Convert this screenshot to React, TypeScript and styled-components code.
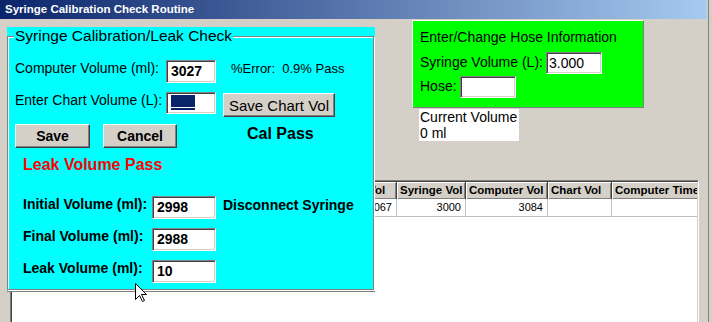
import * as React from 'react'
import styled, { createGlobalStyle } from 'styled-components'

const GlobalStyle = createGlobalStyle`
  html, body {
    margin: 0;
    padding: 0;
    background: #d4d0c8;
  }
  body {
    font-family: "Liberation Sans", Arial, sans-serif;
    color: #000;
  }
`

const Window = styled.div`
  position: relative;
  width: 708px;
  height: 322px;
  overflow: hidden;
  border-right: 1px solid #808080;
`

const TitleBar = styled.div`
  width: 707px;
  height: 19px;
  box-sizing: border-box;
  padding-left: 5px;
  background: linear-gradient(to right, #0a246a, #a6caf0);
  color: #fff;
  font-size: 11.5px;
  font-weight: bold;
  line-height: 19px;
  white-space: nowrap;
`

const Body = styled.div`
  padding-left: 10px;
`

const TopRow = styled.div`
  height: 161px;
  box-sizing: border-box;
  padding: 1px 0 0 402px;
`

const HosePanel = styled.div`
  width: 232px;
  height: 88px;
  box-sizing: border-box;
  padding: 8px 0 0 7px;
  background: #00ff00;
  border: 1px solid;
  border-color: #fff #808080 #808080 #fff;
  font-size: 14px;
  line-height: 16px;
`

const HoseRow = styled.div<{ $top: number }>`
  display: flex;
  align-items: flex-start;
  gap: 3px;
  margin-top: ${p => p.$top}px;
  white-space: nowrap;
`

const HoseLabel = styled.span`
  margin-top: 2px;
`

const VolumeBox = styled.div`
  width: 100px;
  height: 32px;
  box-sizing: border-box;
  margin: 1px 0 0 7px;
  padding-left: 1px;
  background: #fff;
  font-size: 14px;
  line-height: 16px;
`

const TableFrame = styled.div`
  width: 689px;
  height: 160px;
  box-sizing: border-box;
  border: 1px solid;
  border-color: #808080 #fff #fff #808080;
`

const TableInner = styled.div`
  height: 100%;
  box-sizing: border-box;
  border: 1px solid;
  border-color: #404040 #d4d0c8 #d4d0c8 #404040;
  background: #fff;
  overflow: hidden;
`

const Row = styled.div`
  display: flex;
`

const HeadCell = styled.div<{ $w: number }>`
  flex: 0 0 ${p => p.$w}px;
  height: 17px;
  box-sizing: border-box;
  padding: 0 3px;
  background: #d4d0c8;
  border-right: 1px solid #404040;
  box-shadow: inset 1px 1px #fff, inset -1px -1px #808080;
  font-size: 11.5px;
  font-weight: bold;
  line-height: 17px;
  white-space: nowrap;
  overflow: hidden;
`

const DataCell = styled.div<{ $w: number; $right?: boolean }>`
  flex: 0 0 ${p => p.$w}px;
  height: 18px;
  box-sizing: border-box;
  padding: 0 4px;
  border-right: 1px solid #c0c0c0;
  border-bottom: 1px solid #c0c0c0;
  font-size: 11px;
  line-height: 17px;
  text-align: ${p => (p.$right ? 'right' : 'left')};
  white-space: nowrap;
  overflow: hidden;
`

const CalPanel = styled.div`
  position: absolute;
  left: 7px;
  top: 27px;
  width: 368px;
  height: 265px;
  box-sizing: border-box;
  background: #00ffff;
  border-bottom: 1px solid #808080;
`

const Group = styled.fieldset`
  margin: 0;
  padding: 0;
  width: 367px;
  height: 263px;
  min-inline-size: 0;
  box-sizing: border-box;
  border: 1px solid #808080;
  box-shadow: inset 1px 1px #fff, 1px 1px #fff;
`

const GroupTitle = styled.legend`
  margin-left: 6px;
  padding: 0 1px;
  background: #00ffff;
  font-size: 15.5px;
  line-height: 18px;
`

const Section = styled.div<{ $left: number }>`
  padding-left: ${p => p.$left}px;
`

const FormRow = styled.div<{ $top: number }>`
  display: flex;
  align-items: flex-start;
  margin-top: ${p => p.$top}px;
`

const Label = styled.span<{ $w: number; $bold?: boolean }>`
  flex: none;
  width: ${p => p.$w}px;
  font-size: 14px;
  font-weight: ${p => (p.$bold ? 'bold' : 'normal')};
  line-height: 16px;
  white-space: nowrap;
`

const Note = styled.span<{ $left: number; $size: number; $bold?: boolean }>`
  margin-left: ${p => p.$left}px;
  font-size: ${p => p.$size}px;
  font-weight: ${p => (p.$bold ? 'bold' : 'normal')};
  line-height: ${p => p.$size + 4}px;
  white-space: pre;
`

const Field = styled.div<{ $w: number; $h: number; $bold?: boolean; $pad?: number }>`
  flex: none;
  width: ${p => p.$w}px;
  height: ${p => p.$h}px;
  box-sizing: border-box;
  padding-left: ${p => p.$pad ?? 4}px;
  background: #fff;
  border: 1px solid;
  border-color: #808080 #fff #fff #808080;
  box-shadow: inset 1px 1px #404040, inset -1px -1px #d4d0c8;
  font-size: 14px;
  font-weight: ${p => (p.$bold ? 'bold' : 'normal')};
  line-height: ${p => p.$h - 2}px;
  white-space: nowrap;
`

const Selection = styled.span`
  display: block;
  width: 24px;
  height: 15px;
  margin-top: 2px;
  background: linear-gradient(#0a246a 0 12px, #fff 12px 13px, #0a246a 13px);
`

const Button = styled.button<{ $w: number; $left?: number; $top?: number; $size: number; $bold?: boolean }>`
  flex: none;
  width: ${p => p.$w}px;
  height: 24px;
  margin: ${p => p.$top ?? 0}px 0 0 ${p => p.$left ?? 0}px;
  padding: 0;
  box-sizing: border-box;
  background: #d4d0c8;
  border: 1px solid;
  border-color: #fff #404040 #404040 #fff;
  box-shadow: inset -1px -1px #808080;
  font-family: inherit;
  font-size: ${p => p.$size}px;
  font-weight: ${p => (p.$bold ? 'bold' : 'normal')};
  color: #000;
`

const LeakStatus = styled.div`
  margin-top: 8px;
  color: #ff0000;
  font-size: 16px;
  font-weight: bold;
  line-height: 18px;
`

const Cursor = styled.svg`
  position: absolute;
  left: 135px;
  top: 283px;
`

// the first columns sit under the calibration dialog, so they stay blank
const columns = [
  { key: 'test', title: '', w: 48, value: '' },
  { key: 'date', title: '', w: 80, value: '' },
  { key: 'time', title: '', w: 70, value: '' },
  { key: 'hose', title: '', w: 60, value: '' },
  { key: 'result', title: '', w: 62, value: '' },
  { key: 'initial', title: 'Initial Vol', w: 65, value: '3067', right: true },
  { key: 'syringe', title: 'Syringe Vol', w: 69, value: '3000', right: true },
  { key: 'computer', title: 'Computer Vol', w: 82, value: '3084', right: true },
  { key: 'chart', title: 'Chart Vol', w: 64, value: '' },
  { key: 'time2', title: 'Computer Time', w: 100, value: '' },
]

const App = () => {
  return (
    <Window>
      <GlobalStyle />
      <TitleBar>Syringe Calibration Check Routine</TitleBar>
      <Body>
        <TopRow>
          <HosePanel>
            <div>Enter/Change Hose Information</div>
            <HoseRow $top={7}>
              <HoseLabel>Syringe Volume (L):</HoseLabel>
              <Field $w={56} $h={22} $pad={2}>3.000</Field>
            </HoseRow>
            <HoseRow $top={2}>
              <HoseLabel>Hose:</HoseLabel>
              <Field $w={56} $h={22} />
            </HoseRow>
          </HosePanel>
          <VolumeBox>
            Current Volume
            <br />0 ml
          </VolumeBox>
        </TopRow>
        <TableFrame>
          <TableInner>
            <Row>
              {columns.map(c => (
                <HeadCell key={c.key} $w={c.w}>
                  {c.title}
                </HeadCell>
              ))}
            </Row>
            <Row>
              {columns.map(c => (
                <DataCell key={c.key} $w={c.w} $right={c.right}>
                  {c.value}
                </DataCell>
              ))}
            </Row>
          </TableInner>
        </TableFrame>
      </Body>

      <CalPanel>
        <Group>
          <GroupTitle>Syringe Calibration/Leak Check</GroupTitle>
          <Section $left={7}>
            <FormRow $top={15}>
              <Label $w={151}>Computer Volume (ml):</Label>
              <Field $w={50} $h={23} $bold>
                3027
              </Field>
              <Note $left={15} $size={13}>
                %Error:  0.9% Pass
              </Note>
            </FormRow>
            <FormRow $top={9}>
              <Label $w={151}>Enter Chart Volume (L):</Label>
              <Field $w={50} $h={22}>
                <Selection />
              </Field>
              <Button $w={112} $left={7} $top={1} $size={15}>
                Save Chart Vol
              </Button>
            </FormRow>
            <FormRow $top={7}>
              <Button $w={75} $size={14} $bold>
                Save
              </Button>
              <Button $w={74} $left={13} $size={14} $bold>
                Cancel
              </Button>
              <Note $left={70} $size={16} $bold>
                Cal Pass
              </Note>
            </FormRow>
          </Section>
          <Section $left={15}>
            <LeakStatus>Leak Volume Pass</LeakStatus>
            <FormRow $top={22}>
              <Label $w={129} $bold>
                Initial Volume (ml):
              </Label>
              <Field $w={64} $h={23} $bold>
                2998
              </Field>
              <Note $left={7} $size={14} $bold>
                Disconnect Syringe
              </Note>
            </FormRow>
            <FormRow $top={9}>
              <Label $w={129} $bold>
                Final Volume (ml):
              </Label>
              <Field $w={64} $h={23} $bold>
                2988
              </Field>
            </FormRow>
            <FormRow $top={9}>
              <Label $w={129} $bold>
                Leak Volume (ml):
              </Label>
              <Field $w={64} $h={23} $bold>
                10
              </Field>
            </FormRow>
          </Section>
        </Group>
      </CalPanel>

      <Cursor width="13" height="20" viewBox="0 0 13 20">
        <path d="M0.5 0.5 L0.5 16.5 L4.5 12.5 L7.5 18.5 L9.5 17.5 L6.5 11.5 L11.5 11.5 Z" fill="#fff" stroke="#000" strokeWidth="1" />
      </Cursor>
    </Window>
  )
}

export default App
